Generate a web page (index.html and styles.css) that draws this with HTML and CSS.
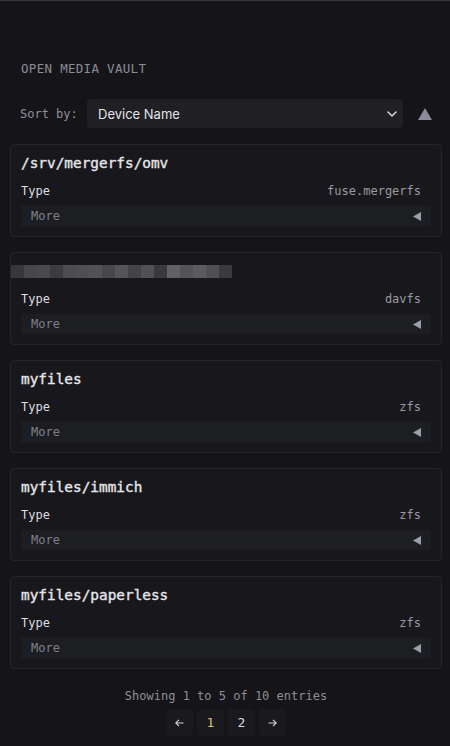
FILE: index.html
```html
<!DOCTYPE html>
<html lang="en">
<head>
<meta charset="utf-8">
<title>Open Media Vault</title>
<link rel="stylesheet" href="styles.css">
</head>
<body>
<div class="page">
  <h1 class="title">OPEN MEDIA VAULT</h1>
  <div class="sort-row">
    <span class="sort-label">Sort by:</span>
    <div class="select">
      <span class="select-text">Device Name</span>
      <svg class="chev" width="10" height="6" viewBox="0 0 10 6"><path d="M1 1 L5 5 L9 1" fill="none" stroke="#d4d4d8" stroke-width="1.6" stroke-linecap="round" stroke-linejoin="round"/></svg>
    </div>
    <svg class="sort-dir" width="14" height="12" viewBox="0 0 14 12"><path d="M7 0 L14 12 L0 12 Z" fill="#8a8a98"/></svg>
  </div>

  <div class="cards">
    <div class="card">
      <div class="card-title">/srv/mergerfs/omv</div>
      <div class="row"><span class="key">Type</span><span class="val">fuse.mergerfs</span></div>
      <div class="more"><span>More</span><svg class="tri" width="8" height="9" viewBox="0 0 8 9"><path d="M0 4.5 L8 0 L8 9 Z" fill="#9c9caa"/></svg></div>
    </div>
    <div class="card">
      <div class="redact">
        <i style="background:#38383c"></i><i style="background:#47474b"></i><i style="background:#4a4a4e"></i><i style="background:#3c3c40"></i><i style="background:#4d4d51"></i><i style="background:#4f4f53"></i><i style="background:#525256"></i><i style="background:#48484c"></i><i style="background:#555559"></i><i style="background:#444448"></i><i style="background:#515155"></i><i style="background:#3a3a3e"></i><i style="background:#616165"></i><i style="background:#545458"></i><i style="background:#5b5b5f"></i><i style="background:#505054"></i><i style="background:#3a3a3e"></i>
      </div>
      <div class="row"><span class="key">Type</span><span class="val">davfs</span></div>
      <div class="more"><span>More</span><svg class="tri" width="8" height="9" viewBox="0 0 8 9"><path d="M0 4.5 L8 0 L8 9 Z" fill="#9c9caa"/></svg></div>
    </div>
    <div class="card">
      <div class="card-title">myfiles</div>
      <div class="row"><span class="key">Type</span><span class="val">zfs</span></div>
      <div class="more"><span>More</span><svg class="tri" width="8" height="9" viewBox="0 0 8 9"><path d="M0 4.5 L8 0 L8 9 Z" fill="#9c9caa"/></svg></div>
    </div>
    <div class="card">
      <div class="card-title">myfiles/immich</div>
      <div class="row"><span class="key">Type</span><span class="val">zfs</span></div>
      <div class="more"><span>More</span><svg class="tri" width="8" height="9" viewBox="0 0 8 9"><path d="M0 4.5 L8 0 L8 9 Z" fill="#9c9caa"/></svg></div>
    </div>
    <div class="card">
      <div class="card-title">myfiles/paperless</div>
      <div class="row"><span class="key">Type</span><span class="val">zfs</span></div>
      <div class="more"><span>More</span><svg class="tri" width="8" height="9" viewBox="0 0 8 9"><path d="M0 4.5 L8 0 L8 9 Z" fill="#9c9caa"/></svg></div>
    </div>
  </div>

  <div class="footer">
    <div class="showing">Showing 1 to 5 of 10 entries</div>
    <div class="pager">
      <span class="pg"><svg width="9" height="8" viewBox="0 0 9 8"><path d="M8.5 4 H1 M4 0.8 L0.8 4 L4 7.2" fill="none" stroke="#cfcfd4" stroke-width="1.2"/></svg></span>
      <span class="pg active">1</span>
      <span class="pg">2</span>
      <span class="pg"><svg width="9" height="8" viewBox="0 0 9 8"><path d="M0.5 4 H8 M5 0.8 L8.2 4 L5 7.2" fill="none" stroke="#cfcfd4" stroke-width="1.2"/></svg></span>
    </div>
  </div>
</div>
</body>
</html>
```

FILE: styles.css
```css
html, body {
  margin: 0;
  padding: 0;
  background: #151519;
}
body {
  border-top: 1px solid #35353a;
  font-family: "DejaVu Sans Mono", "Liberation Mono", monospace;
  color: #e2e2e6;
}
.page {
  padding: 60px 8px 10px 10px;
}
.title {
  margin: 0 0 0 11px;
  font-size: 12.5px;
  font-weight: normal;
  color: #8c8c94;
  line-height: 16px;
  letter-spacing: 0.3px;
}
.sort-row {
  display: flex;
  align-items: center;
  margin-top: 22px;
  height: 29px;
}
.sort-label {
  margin-left: 10px;
  font-size: 12px;
  color: #8f8f97;
  width: 67px;
}
.select {
  width: 316px;
  height: 29px;
  box-sizing: border-box;
  background: #1f1f24;
  border-radius: 4px;
  display: flex;
  align-items: center;
  justify-content: space-between;
  padding: 0 6px 0 11px;
}
.select-text {
  font-family: Inter, "Noto Sans", sans-serif;
  font-size: 13px;
  color: #e4e4e8;
}
.chev { display: block; }
.sort-dir {
  display: block;
  margin-left: 15px;
}
.cards {
  margin-top: 16px;
  display: flex;
  flex-direction: column;
  gap: 15px;
}
.card {
  border: 1px solid #24242a;
  background: #18181c;
  border-radius: 4px;
  padding: 10px 10px 10px 10px;
}
.card-title {
  font-size: 14.4px;
  font-weight: normal;
  -webkit-text-stroke: 0.35px #e6e6ea;
  line-height: 16px;
  color: #e6e6ea;
  height: 16px;
}
.redact {
  display: flex;
  margin-left: -10px;
  height: 16px;
  align-items: center;
}
.redact i {
  display: block;
  width: 13px;
  height: 13px;
}
.row {
  display: flex;
  justify-content: space-between;
  margin-top: 13px;
  padding-right: 10px;
  font-size: 12px;
  line-height: 14px;
}
.key { color: #dcdce0; }
.val { color: #9a9aa2; }
.more {
  margin-top: 8px;
  height: 20px;
  background: #1d1e22;
  display: flex;
  align-items: center;
  justify-content: space-between;
  padding: 0 10px;
  font-size: 12px;
  color: #7f7f8a;
}
.tri {
  display: block;
}
.footer {
  display: flex;
  flex-direction: column;
  align-items: center;
  margin-top: 19px;
}
.showing {
  font-size: 12px;
  line-height: 16px;
  color: #8d8d95;
}
.pager {
  display: flex;
  gap: 4px;
  margin-top: 5px;
}
.pg {
  width: 27px;
  height: 27px;
  background: #19191e;
  border-radius: 4px;
  display: flex;
  align-items: center;
  justify-content: center;
  font-size: 13px;
  color: #d8d8dc;
}
.pg.active { color: #d9bf6e; }
```
